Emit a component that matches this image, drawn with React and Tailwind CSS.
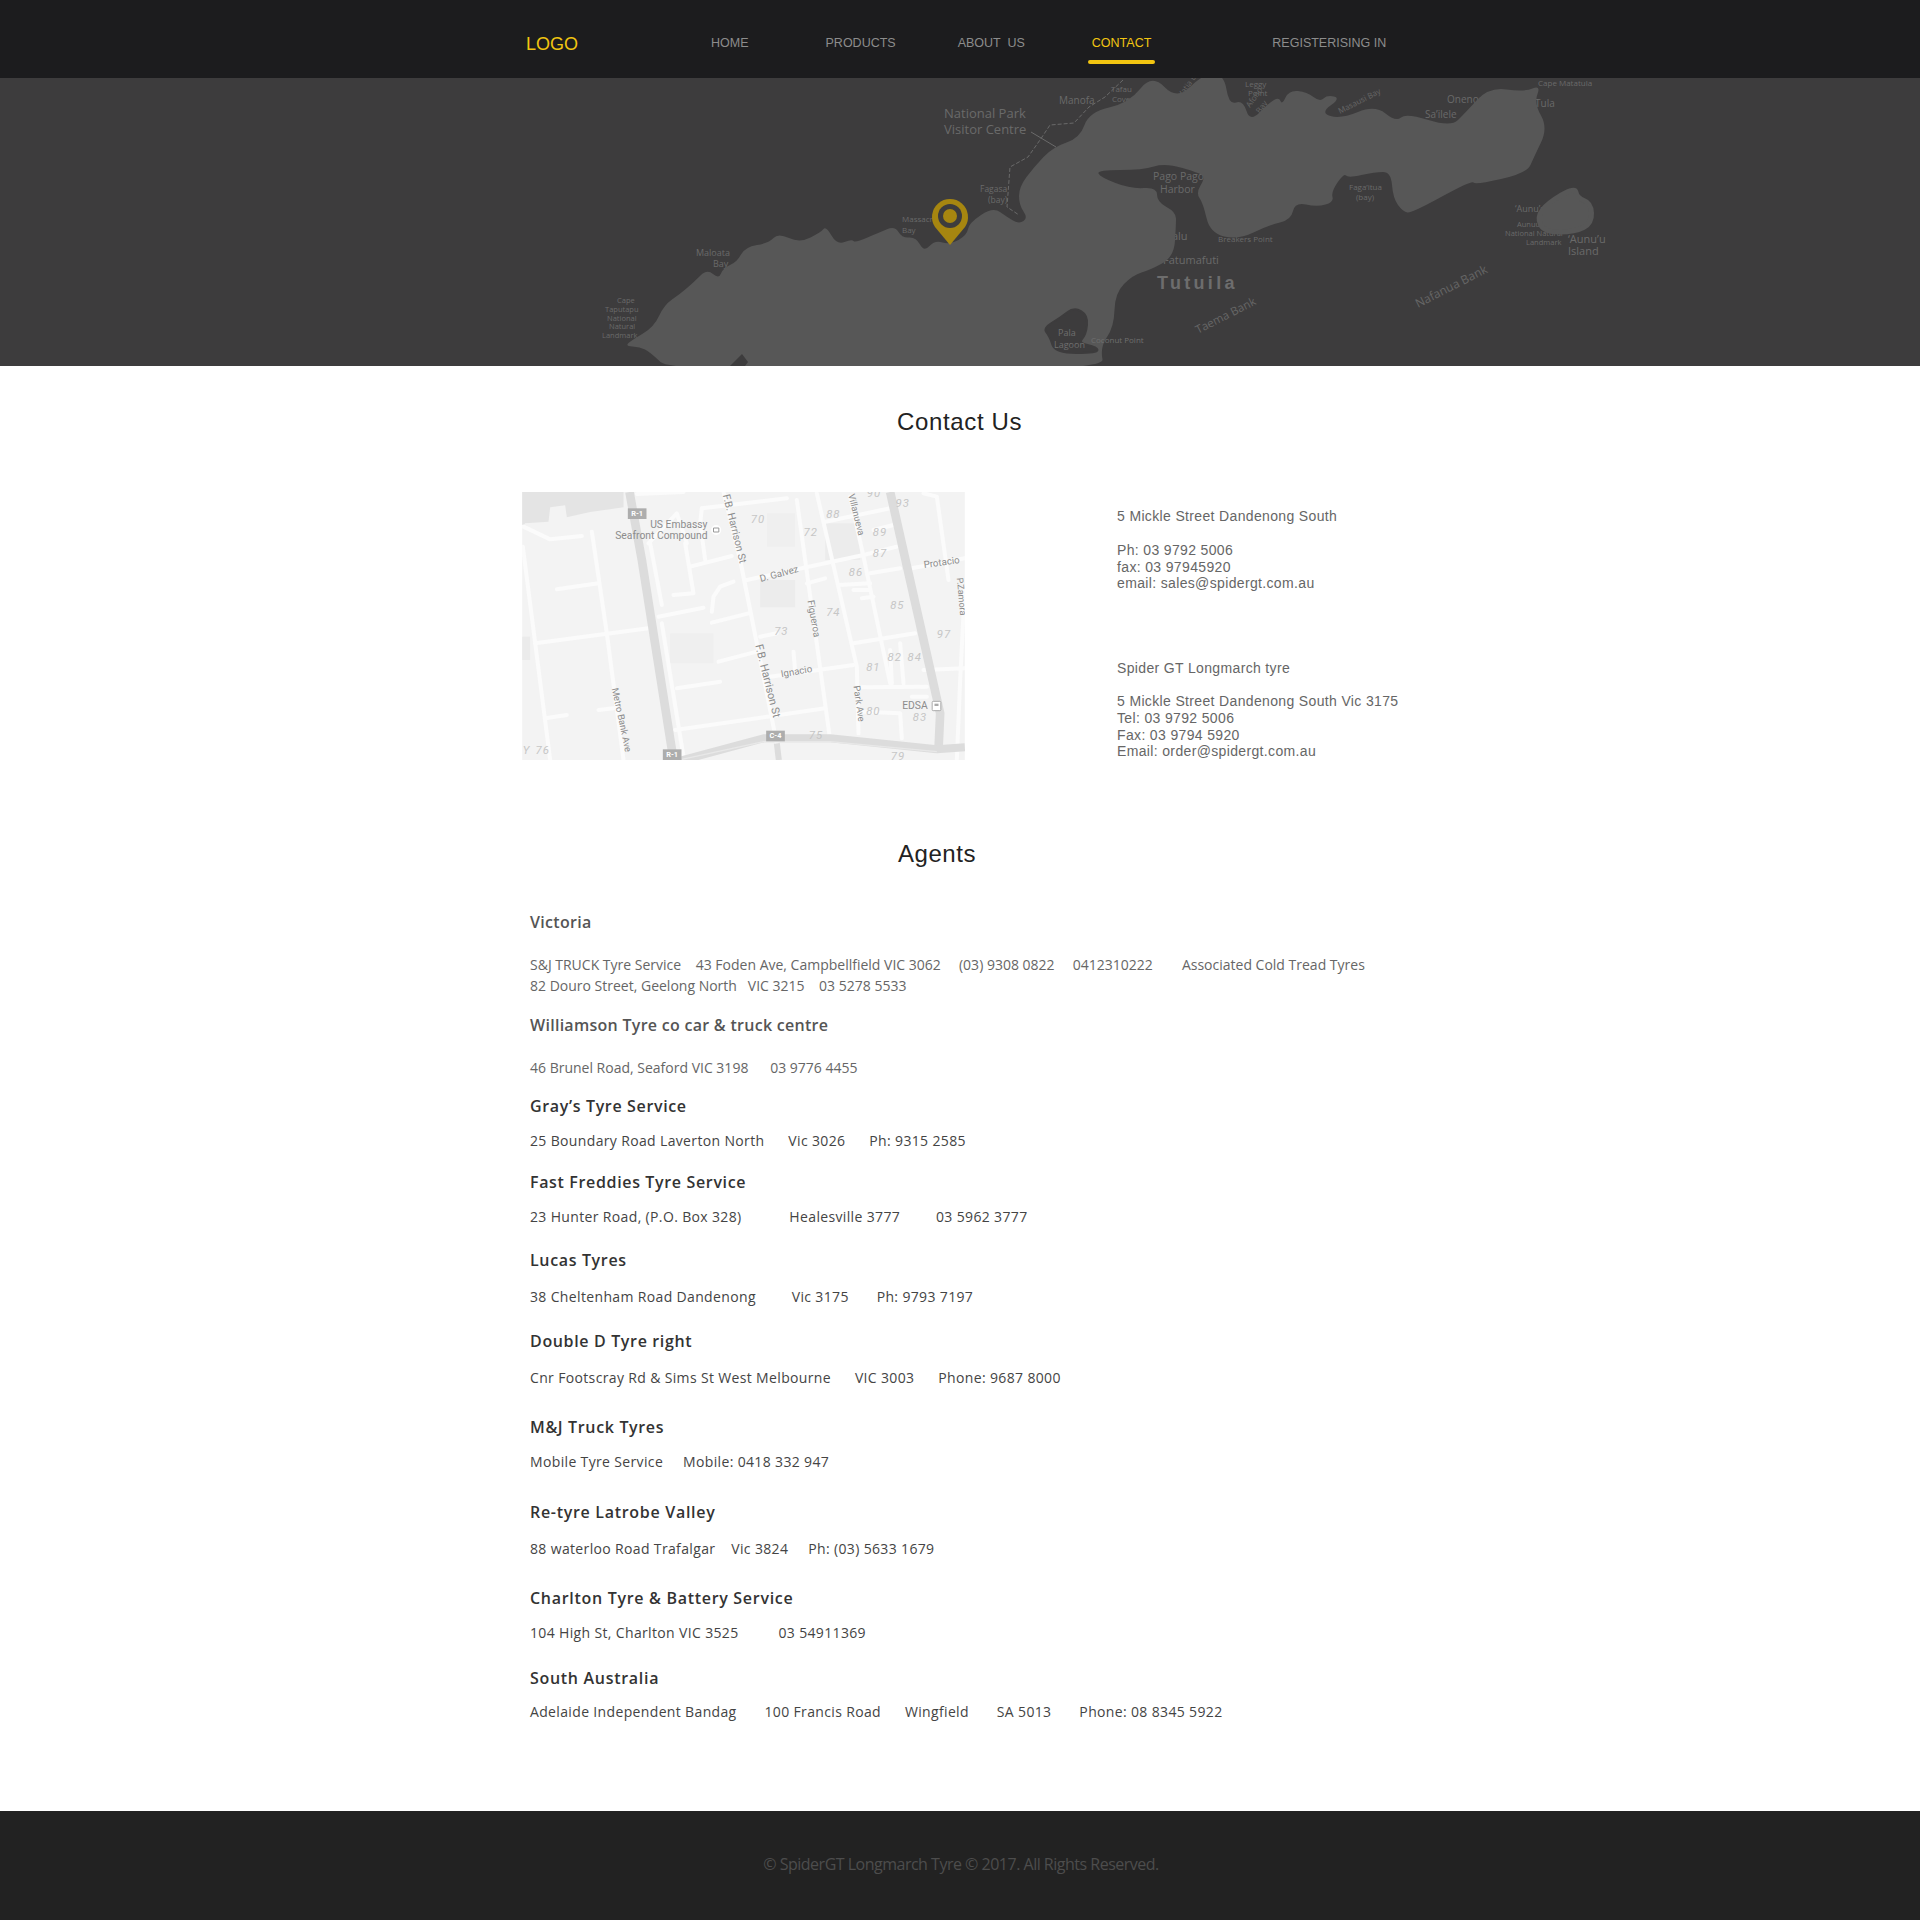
const navItems = [
  { label: 'HOME', className: 'ml-[133px] text-[#8c8c8c]' },
  { label: 'PRODUCTS', className: 'ml-[77px] text-[#8c8c8c]' },
  { label: 'ABOUT  US', className: 'ml-[62px] text-[#8c8c8c]' },
  { label: 'CONTACT', className: 'ml-[67px] text-[#f2c511]', active: true },
  { label: 'REGISTERISING IN', className: 'ml-[121px] text-[#8c8c8c]' },
];

const agents = [
  { text: 'Victoria', className: 'mt-[40px] font-semibold text-[#555] h-[24px] leading-[24px] text-[16px] tracking-[0.3px]' },
  {
    text: 'S&J TRUCK Tyre Service    43 Foden Ave, Campbellfield VIC 3062     (03) 9308 0822     0412310222        Associated Cold Tread Tyres\n82 Douro Street, Geelong North   VIC 3215    03 5278 5533',
    className: 'mt-[20px] text-[#666] leading-[21px] text-[14px]',
  },
  { text: 'Williamson Tyre co car & truck centre', className: 'mt-[17px] font-semibold text-[#555] h-[24px] leading-[24px] text-[16px] tracking-[0.28px]' },
  { text: '46 Brunel Road, Seaford VIC 3198      03 9776 4455', className: 'mt-[20px] text-[#666] leading-[21px] text-[14px]' },
  { text: 'Gray’s Tyre Service', className: 'mt-[16px] font-semibold text-[#333] h-[24px] leading-[24px] text-[16px] tracking-[0.65px]' },
  { text: '25 Boundary Road Laverton North      Vic 3026      Ph: 9315 2585', className: 'mt-[12px] text-[#444] leading-[21px] text-[14px] tracking-[0.35px]' },
  { text: 'Fast Freddies Tyre Service', className: 'mt-[19px] font-semibold text-[#333] h-[24px] leading-[24px] text-[16px] tracking-[0.65px]' },
  { text: '23 Hunter Road, (P.O. Box 328)            Healesville 3777         03 5962 3777', className: 'mt-[12px] text-[#444] leading-[21px] text-[14px] tracking-[0.35px]' },
  { text: 'Lucas Tyres', className: 'mt-[21px] font-semibold text-[#333] h-[24px] leading-[24px] text-[16px] tracking-[0.65px]' },
  { text: '38 Cheltenham Road Dandenong         Vic 3175       Ph: 9793 7197', className: 'mt-[14px] text-[#444] leading-[21px] text-[14px] tracking-[0.35px]' },
  { text: 'Double D Tyre right', className: 'mt-[22px] font-semibold text-[#333] h-[24px] leading-[24px] text-[16px] tracking-[0.65px]' },
  { text: 'Cnr Footscray Rd & Sims St West Melbourne      VIC 3003      Phone: 9687 8000', className: 'mt-[14px] text-[#444] leading-[21px] text-[14px] tracking-[0.35px]' },
  { text: 'M&J Truck Tyres', className: 'mt-[27px] font-semibold text-[#333] h-[24px] leading-[24px] text-[16px] tracking-[0.65px]' },
  { text: 'Mobile Tyre Service     Mobile: 0418 332 947', className: 'mt-[12px] text-[#444] leading-[21px] text-[14px] tracking-[0.35px]' },
  { text: 'Re-tyre Latrobe Valley', className: 'mt-[28px] font-semibold text-[#333] h-[24px] leading-[24px] text-[16px] tracking-[0.7px]' },
  { text: '88 waterloo Road Trafalgar    Vic 3824     Ph: (03) 5633 1679', className: 'mt-[14px] text-[#444] leading-[21px] text-[14px] tracking-[0.35px]' },
  { text: 'Charlton Tyre & Battery Service', className: 'mt-[27px] font-semibold text-[#333] h-[24px] leading-[24px] text-[16px] tracking-[0.7px]' },
  { text: '104 High St, Charlton VIC 3525          03 54911369', className: 'mt-[12px] text-[#444] leading-[21px] text-[14px] tracking-[0.35px]' },
  { text: 'South Australia', className: 'mt-[23px] font-semibold text-[#333] h-[24px] leading-[24px] text-[16px] tracking-[0.7px]' },
  { text: 'Adelaide Independent Bandag       100 Francis Road      Wingfield       SA 5013       Phone: 08 8345 5922', className: 'mt-[11px] text-[#444] leading-[21px] text-[14px] tracking-[0.35px]' },
];

const coast = [
  [671, 372], [650, 352], [640, 347], [625, 346], [632, 340], [654, 327], [664, 305], [680, 294], [694, 282], [707, 269], [719, 279], [723, 268], [737, 262], [745, 247], [769, 243], [778, 233], [800, 243], [821, 232], [826, 226], [837, 245], [852, 239], [855, 243], [880, 232], [895, 226], [902, 238], [916, 237], [924, 252], [935, 240], [950, 245], [967, 235], [969, 223], [993, 207], [1007, 217], [1019, 224], [1028, 218], [1019, 205], [1019, 187], [1034, 167], [1053, 147], [1080, 138], [1089, 112], [1129, 103], [1152, 74], [1177, 100], [1203, 74], [1224, 74], [1229, 105], [1243, 100], [1250, 122], [1269, 103], [1279, 97], [1282, 105], [1289, 90], [1307, 92], [1320, 102], [1327, 95], [1341, 98], [1320, 113], [1341, 119], [1375, 105], [1396, 122], [1406, 113], [1451, 127], [1465, 113], [1489, 87], [1524, 92], [1541, 85], [1534, 103], [1548, 128], [1534, 157], [1527, 173], [1475, 185], [1472, 180], [1412, 213], [1403, 212], [1393, 198], [1391, 172], [1375, 172], [1348, 178], [1344, 173], [1331, 192], [1334, 202], [1317, 207], [1295, 202], [1291, 220], [1269, 225], [1238, 240], [1210, 233], [1203, 203], [1196, 193], [1205, 178], [1200, 173], [1165, 163], [1143, 170], [1097, 170], [1100, 177], [1131, 189], [1157, 187], [1157, 202], [1176, 212], [1176, 225], [1174, 257], [1150, 270], [1133, 275], [1115, 293], [1114, 327], [1100, 347], [1105, 372],
];

const lagoon = [[1043, 328], [1060, 318], [1074, 307], [1088, 315], [1086, 335], [1078, 343], [1097, 347], [1098, 353], [1055, 353], [1050, 337]];
const island = [[1537, 217], [1548, 203], [1575, 187], [1577, 198], [1591, 203], [1592, 223], [1575, 232], [1544, 232]];
const trail = '1123,80 1105,97 1089,107 1074,123 1050,125 1040,140 1028,157 1010,167 1007,207 1019,215';

// closed curve through the midpoints, so the coast doesn't come out as a polygon
const smooth = (pts) => {
  const mid = (a, b) => [(a[0] + b[0]) / 2, (a[1] + b[1]) / 2];
  const start = mid(pts[pts.length - 1], pts[0]);
  let d = `M${start[0]} ${start[1]}`;
  pts.forEach((p, i) => {
    const m = mid(p, pts[(i + 1) % pts.length]);
    d += `Q${p[0]} ${p[1]} ${m[0]} ${m[1]}`;
  });
  return d + 'Z';
};

const heroLabels = [
  ['National Park', 944, 118, 13],
  ['Visitor Centre', 944, 134, 13],
  ['Manofa', 1059, 104, 10],
  ['Tafau', 1111, 92, 8],
  ['Cove', 1112, 102, 8],
  ['Fagasa', 980, 192, 8.5],
  ['(bay)', 988, 203, 8.5],
  ['Massacre', 902, 222, 8],
  ['Bay', 902, 233, 8],
  ['Maloata', 696, 256, 9],
  ['Bay', 713, 267, 9],
  ['Cape', 617, 303, 7.5],
  ['Taputapu', 605, 312, 7.5],
  ['National', 607, 321, 7.5],
  ['Natural', 609, 329, 7.5],
  ['Landmark', 602, 338, 7.5],
  ['Pago Pago', 1153, 180, 10.5],
  ['Harbor', 1160, 193, 10.5],
  ['Faga’itua', 1349, 190, 8],
  ['(bay)', 1356, 200, 8],
  ['Breakers Point', 1218, 242, 8],
  ['a’alu', 1164, 240, 11],
  ['Fatumafuti', 1163, 264, 11],
  ['Onenoa', 1447, 103, 10],
  ['Sa’ilele', 1425, 118, 10],
  ['Tula', 1535, 107, 10],
  ['Cape Matatula', 1538, 86, 8],
  ['Leggy', 1245, 87, 8],
  ['Point', 1248, 96, 8],
  ['‘Aunu’u', 1515, 212, 9],
  ['Aunuu', 1517, 227, 7.5],
  ['National Natural', 1505, 236, 7.5],
  ['Landmark', 1526, 245, 7.5],
  ['‘Aunu’u', 1568, 243, 11],
  ['Island', 1568, 255, 11],
];

const rotatedLabels = [
  ['Taema Bank', 1198, 334, 11.5, -27],
  ['Nafanua Bank', 1418, 308, 12, -27],
  ['Masausi Bay', 1340, 114, 8, -27],
  ['Vatia Bay', 1182, 98, 8, -55],
  ['Afono', 1250, 108, 8, -55],
  ['Bay', 1260, 114, 8, -55],
];

const lagoonLabels = [
  ['Pala', 1058, 336, 9],
  ['Lagoon', 1054, 348, 9],
  ['Coconut Point', 1091, 343, 8],
];

const HeroMap = () => (
  <svg className="block w-full h-[288px] bg-[#3d3c3d]" viewBox="0 78 1920 288" fontFamily="'Open Sans', sans-serif">
    {heroLabels.map(([t, x, y, s]) => (
      <text key={t + x} x={x} y={y} fontSize={s} fill="#6a6a6a">{t}</text>
    ))}
    {rotatedLabels.map(([t, x, y, s, r]) => (
      <text key={t} x={x} y={y} fontSize={s} fill="#666" transform={`rotate(${r} ${x} ${y})`}>{t}</text>
    ))}
    <path d={smooth(coast)} fill="#575757" />
    <path d={smooth(island)} fill="#575757" stroke="#575757" strokeWidth="5" />
    <path d={smooth(lagoon)} fill="#3d3c3d" stroke="#3d3c3d" strokeWidth="2" />
    <polygon points="730,366 742,354 748,362 745,366" fill="#3d3c3d" />
    <polyline points={trail} fill="none" stroke="#6a6a6a" strokeDasharray="4 2" />
    <line x1="1031" y1="132" x2="1056" y2="147" stroke="#6a6a6a" />
    {lagoonLabels.map(([t, x, y, s]) => (
      <text key={t} x={x} y={y} fontSize={s} fill="#6f6f6f">{t}</text>
    ))}
    <text x="1157" y="289" fontSize="18" fontWeight="700" letterSpacing="3.3" fill="#6d6d6d" fontFamily="'Liberation Sans', sans-serif">Tutuila</text>
    {/* pin */}
    <path d="M950 245 L935 227 A18 18 0 1 1 965 227 Z" fill="#a68610" />
    <circle cx="950" cy="216" r="12" fill="#3d3c3d" />
    <circle cx="950" cy="216" r="7" fill="#a68610" />
  </svg>
);

const minorRoads = [
  'M640 36L690 240L800 790',
  'M38 200L120 840',
  'M245 155L290 460L340 840',
  'M140 328L265 310',
  'M75 490L415 445',
  'M105 715L170 705',
  'M265 690L310 685',
  'M40 140L120 178L215 168',
  'M380 42L520 36',
  'M420 190L455 375',
  'M445 410L580 383',
  'M455 430L520 830',
  'M500 625L630 605',
  'M495 750L945 685',
  'M540 260L665 228',
  'M525 190L550 340L490 345',
  'M415 190L500 100L530 190',
  'M575 85L570 130L585 240',
  'M575 85L830 55',
  'M710 300L1060 225L1160 200',
  'M605 395L610 350L630 320L670 305',
  'M605 428L715 400',
  'M625 545L740 515',
  'M750 470L800 460',
  'M860 60L960 780',
  'M920 40L1040 560L1045 760',
  'M1020 50L1060 230L1140 610',
  'M945 125L1140 85',
  'M1090 150L1150 135',
  'M1080 280L1170 265',
  'M1205 265L1364 235',
  'M985 315L1080 310',
  'M1030 330L1080 330',
  'M1055 355L1090 350',
  'M890 310L945 295',
  'M1030 490L1215 460',
  'M780 590L1030 555',
  'M850 515L855 575',
  'M1140 510L1145 610',
  'M1170 490L1180 610',
  'M1050 622L1250 620',
  'M1205 650L1250 650',
  'M1060 695L1170 700L1175 775',
  'M1240 570L1364 565',
  'M1240 40L1280 50L1315 300',
  'M1364 320L1350 600L1340 840',
];

const streetLabels = [
  ['US Embassy', 420, 143, 31, 0],
  ['Seafront Compound', 315, 177, 31, 0],
  ['F.B. Harrison St', 638, 46, 31, 76],
  ['D. Galvez', 752, 306, 29, -15],
  ['Figueroa', 892, 362, 29, 80],
  ['Villanueva', 1014, 44, 28, 76],
  ['F.B. Harrison St', 735, 496, 33, 76],
  ['Ignacio', 814, 592, 29, -10],
  ['Park Ave', 1030, 618, 28, 82],
  ['Metro Bank Ave', 305, 626, 28, 78],
  ['Protacio', 1242, 264, 29, -8],
  ['P.Zamora', 1340, 294, 27, 85],
  ['EDSA', 1176, 686, 31, 0],
];

const blockNumbers = [
  ['90', 1070, 52], ['93', 1156, 82], ['88', 948, 114], ['70', 722, 130], ['72', 880, 168], ['89', 1088, 168],
  ['87', 1088, 232], ['86', 1016, 288], ['85', 1140, 388], ['74', 948, 408], ['73', 792, 466], ['97', 1280, 474],
  ['82', 1132, 542], ['84', 1192, 542], ['81', 1068, 572], ['80', 1068, 704], ['83', 1208, 724], ['75', 896, 776],
  ['79', 1142, 840], ['76', 76, 822], ['Y', 38, 822],
];

const shields = [
  ['R-1', 353, 85],
  ['R-1', 458, 808],
  ['C-4', 768, 752],
];

// the map is drawn in the coordinates of a 3x crop, so the stroke widths are 3x too
const StreetMap = () => (
  <svg className="block w-[443px] h-[268px] shrink-0" viewBox="36 36 1328 804" fontFamily="Roboto, sans-serif">
    <rect x="36" y="36" width="1328" height="804" fill="#f3f3f3" />
    <path d="M36 36H340V82L240 96L170 112L165 76L120 82L115 125L45 130L36 140Z" fill="#e4e4e4" />
    <rect x="945" y="130" width="105" height="110" fill="#ececec" />
    <rect x="750" y="300" width="105" height="82" fill="#ececec" />
    <rect x="480" y="460" width="130" height="90" fill="#efefef" />
    <rect x="770" y="100" width="85" height="100" fill="#efefef" />
    <rect x="36" y="470" width="24" height="70" fill="#ebebeb" />
    <g fill="none" stroke="#fbfbfb" strokeWidth="12" strokeLinecap="round" strokeLinejoin="round">
      {minorRoads.map((d) => (
        <path key={d} d={d} />
      ))}
    </g>
    <g fill="none" stroke="#dcdcdc" strokeWidth="26" strokeLinejoin="round">
      <path d="M358 36L395 240L490 840" />
      <path d="M1140 36L1290 700L1285 810" />
      <path d="M500 845L760 775L960 775L1280 808L1364 802" strokeWidth="24" />
      <path d="M800 790L806 840" strokeWidth="18" />
    </g>
    <path d="M515 838L760 785L960 785L1280 815" fill="none" stroke="#e8e8e8" strokeWidth="4" />
    {streetLabels.map(([t, x, y, s, r]) => (
      <text key={t + x} x={x} y={y} fontSize={s} fill="#8c8c8c" transform={`rotate(${r} ${x} ${y})`}>{t}</text>
    ))}
    {blockNumbers.map(([t, x, y]) => (
      <text key={t + x} x={x} y={y} fontSize="34" fontStyle="italic" fill="#c6c6c6" letterSpacing="3">{t}</text>
    ))}
    {shields.map(([t, x, y]) => (
      <g key={t + x}>
        <rect x={x} y={y} width="56" height="32" fill="#adadad" />
        <text x={x + 28} y={y + 23} fontSize="22" fontWeight="700" fill="#fff" textAnchor="middle">{t}</text>
      </g>
    ))}
    <circle cx="618" cy="150" r="15" fill="#fff" />
    <path d="M610 144h16v12h-16z" fill="none" stroke="#9a9a9a" strokeWidth="3" />
    <rect x="1266" y="664" width="26" height="28" rx="3" fill="#fff" stroke="#aaa" strokeWidth="3" />
    <rect x="1273" y="671" width="12" height="7" fill="#aaa" />
  </svg>
);

const App = () => (
  <div className="bg-white font-['Liberation_Sans',sans-serif]">
    <header className="h-[78px] bg-[#1c1c1e] flex items-center pl-[526px] pt-[8px]">
      <span className="text-[18px] leading-[22px] text-[#f2c511] mt-[1px]">LOGO</span>
      {navItems.map((item) => (
        <span key={item.label} className={`relative whitespace-pre text-[12.5px] leading-[16px] ${item.className}`}>
          {item.label}
          {item.active && <span className="absolute left-[-4px] right-[-4px] top-[25px] h-[4px] rounded-[2px] bg-[#f2c511]" />}
        </span>
      ))}
    </header>

    <HeroMap />

    <main className="h-[1445px] pt-[40px]">
      <h1 className="ml-[897px] text-[24px] leading-[32px] tracking-[0.65px] text-[#222]">Contact Us</h1>

      <section className="mt-[54px] ml-[522px] flex">
        <StreetMap />
        <div className="ml-[152px] mt-[16px] text-[14px] leading-[16.8px] tracking-[0.35px] text-[#666]">
          <p>5 Mickle Street Dandenong South</p>
          <p className="mt-[17px]">Ph: 03 9792 5006</p>
          <p>fax: 03 97945920</p>
          <p>email: sales@spidergt.com.au</p>
          <p className="mt-[68px]">Spider GT Longmarch tyre</p>
          <p className="mt-[16px]">5 Mickle Street Dandenong South Vic 3175</p>
          <p>Tel: 03 9792 5006</p>
          <p>Fax: 03 9794 5920</p>
          <p>Email: order@spidergt.com.au</p>
        </div>
      </section>

      <section className="mt-[78px] pl-[530px]">
        <h2 className="ml-[368px] text-[24px] leading-[32px] tracking-[0.55px] text-[#222]">Agents</h2>
        <div className="font-['Open_Sans',sans-serif] whitespace-pre">
          {agents.map((row) => (
            <p key={row.text} className={row.className}>{row.text}</p>
          ))}
        </div>
      </section>
    </main>

    <footer className="h-[109px] bg-[#222222] flex items-center justify-center pl-[2px] pb-[4px]">
      <p className="font-['Open_Sans',sans-serif] text-[16px] tracking-[-0.5px] text-[#4d4d4d]">© SpiderGT Longmarch Tyre © 2017. All Rights Reserved.</p>
    </footer>
  </div>
);

export default App;
